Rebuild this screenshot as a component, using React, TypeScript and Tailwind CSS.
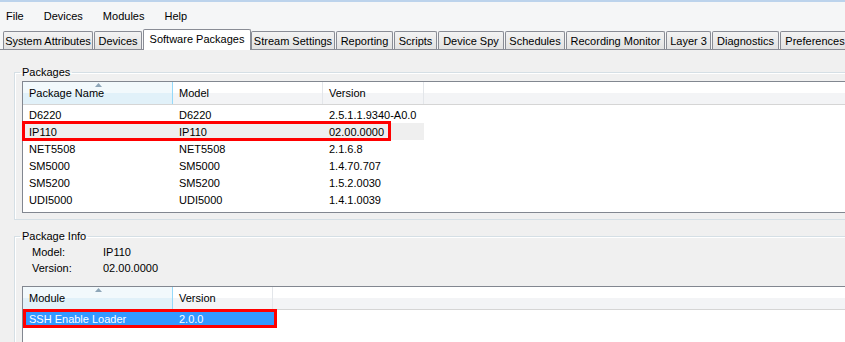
import React from 'react'

type Col = { label: string; w: string; sorted?: boolean }

const tabs = [
  { label: 'System Attributes', cls: 'ml-[3px] w-[90px]' },
  { label: 'Devices', cls: 'ml-px w-[48px]' },
  { label: 'Software Packages', cls: 'ml-px w-[108px]', active: true },
  { label: 'Stream Settings', cls: 'w-[84px]' },
  { label: 'Reporting', cls: 'ml-px w-[57px]' },
  { label: 'Scripts', cls: 'ml-px w-[43px]' },
  { label: 'Device Spy', cls: 'ml-px w-[66px]' },
  { label: 'Schedules', cls: 'ml-px w-[60px]' },
  { label: 'Recording Monitor', cls: 'ml-px w-[99px]' },
  { label: 'Layer 3', cls: 'ml-px w-[45px]' },
  { label: 'Diagnostics', cls: 'ml-px w-[67px]' },
  { label: 'Preferences', cls: 'ml-px w-[70px]' },
]

const packages = [
  ['D6220', 'D6220', '2.5.1.1.9340-A0.0'],
  ['IP110', 'IP110', '02.00.0000'],
  ['NET5508', 'NET5508', '2.1.6.8'],
  ['SM5000', 'SM5000', '1.4.70.707'],
  ['SM5200', 'SM5200', '1.5.2.0030'],
  ['UDI5000', 'UDI5000', '1.4.1.0039'],
]

const packageCols: Col[] = [
  { label: 'Package Name', w: 'w-[150px]', sorted: true },
  { label: 'Model', w: 'w-[150px]' },
  { label: 'Version', w: 'w-[101px]' },
]

const moduleCols: Col[] = [
  { label: 'Module', w: 'w-[150px]', sorted: true },
  { label: 'Version', w: 'w-[100px]' },
]

function SortArrow() {
  return (
    <svg className="absolute top-[1px] left-[72px]" width="7" height="4" viewBox="0 0 7 4">
      <polygon points="0,4 3.5,0 7,4" fill="#8ea6b8" />
    </svg>
  )
}

function Header({ cols }: { cols: Col[] }) {
  return (
    <div className="flex h-[23px] shrink-0 border-b border-[#d5d5d5] bg-[linear-gradient(to_bottom,#ffffff_50%,#f3f4f6_50%)]">
      {cols.map((c) =>
        c.sorted ? (
          <div
            key={c.label}
            className={`relative flex shrink-0 items-center border-r border-[#96d9f9] bg-[linear-gradient(to_bottom,#f2f9fc_50%,#e1f1f9_50%)] pl-[6px] ${c.w}`}
          >
            <SortArrow />
            {c.label}
          </div>
        ) : (
          <div
            key={c.label}
            className={`flex shrink-0 items-center border-r border-[#e3e6ea] pl-[6px] ${c.w}`}
          >
            {c.label}
          </div>
        ),
      )}
    </div>
  )
}

export default function App() {
  return (
    <div className="flex h-[342px] w-[845px] flex-col overflow-hidden bg-[#f0f0f0] font-['Liberation_Sans',Arial,sans-serif] text-[11px] leading-[14px] text-black">
      <div className="h-[2px] shrink-0 bg-[#bcd3ec]" />

      {/* menu */}
      <div className="flex h-[27px] shrink-0 items-center gap-[20px] bg-[#f5f6f7] pl-[6px]">
        <span>File</span>
        <span>Devices</span>
        <span>Modules</span>
        <span>Help</span>
      </div>

      {/* tabs */}
      <div className="flex h-[20px] shrink-0 items-end bg-[#f5f6f7]">
        {tabs.map((t) =>
          t.active ? (
            <div
              key={t.label}
              className={`relative z-10 -mb-px flex h-[21px] shrink-0 items-center justify-center rounded-t-[2px] border border-b-0 border-[#898c95] bg-white pb-[3px] ${t.cls}`}
            >
              {t.label}
            </div>
          ) : (
            <div
              key={t.label}
              className={`flex h-[18px] shrink-0 items-center justify-center whitespace-nowrap rounded-t-[2px] border border-b-0 border-[#898c95] bg-linear-to-b from-[#f3f3f3] to-[#e2e2e2] ${t.cls}`}
            >
              {t.label}
            </div>
          ),
        )}
      </div>

      {/* tab page */}
      <div className="flex-1 border-t border-[#898c95] bg-[#f0f0f0]">
        <fieldset className="ml-[14px] mt-[15px] w-[900px] border border-[#d5dfe5] pb-[6px] shadow-[inset_1px_1px_0_#ffffff]">
          <legend className="ml-[5px] px-[2px] leading-[14px]">Packages</legend>
          <div className="ml-[7px] mt-[2px] flex h-[132px] w-[880px] flex-col border border-[#828790] bg-white">
            <Header cols={packageCols} />
            <div className="pt-[1px]">
              {packages.map((p) => (
                <div
                  key={p[0]}
                  className={`relative flex h-[17px] w-[401px] items-center ${p[0] === 'IP110' ? 'bg-[#efefef]' : ''}`}
                >
                  <span className="w-[150px] shrink-0 pl-[6px]">{p[0]}</span>
                  <span className="w-[150px] shrink-0 pl-[6px]">{p[1]}</span>
                  <span className="w-[101px] shrink-0 pl-[6px]">{p[2]}</span>
                  {p[0] === 'IP110' && (
                    <div className="absolute -left-px -top-[2px] h-[20px] w-[369px] border-[3px] border-[#ff0000]" />
                  )}
                </div>
              ))}
            </div>
          </div>
        </fieldset>

        <fieldset className="ml-[14px] mt-[9px] h-[200px] w-[900px] border border-[#d5dfe5] shadow-[inset_1px_1px_0_#ffffff]">
          <legend className="ml-[5px] px-[2px] leading-[14px]">Package Info</legend>
          <div className="ml-[17px] mt-[1px]">
            <div className="flex h-[16px] items-center">
              <span className="w-[71px]">Model:</span>
              <span>IP110</span>
            </div>
            <div className="flex h-[16px] items-center">
              <span className="w-[71px]">Version:</span>
              <span>02.00.0000</span>
            </div>
          </div>
          <div className="ml-[7px] mt-[10px] flex h-[120px] w-[880px] flex-col border border-[#828790] bg-white">
            <Header cols={moduleCols} />
            <div className="relative flex h-[17px] w-[252px] items-center bg-[#3399ff] text-white">
              <span className="w-[150px] shrink-0 pl-[6px]">SSH Enable Loader</span>
              <span className="w-[100px] shrink-0 pl-[6px]">2.0.0</span>
              <div className="absolute left-0 -top-px h-[19px] w-[254px] border-[3px] border-[#ff0000]" />
            </div>
          </div>
        </fieldset>
      </div>
    </div>
  )
}
